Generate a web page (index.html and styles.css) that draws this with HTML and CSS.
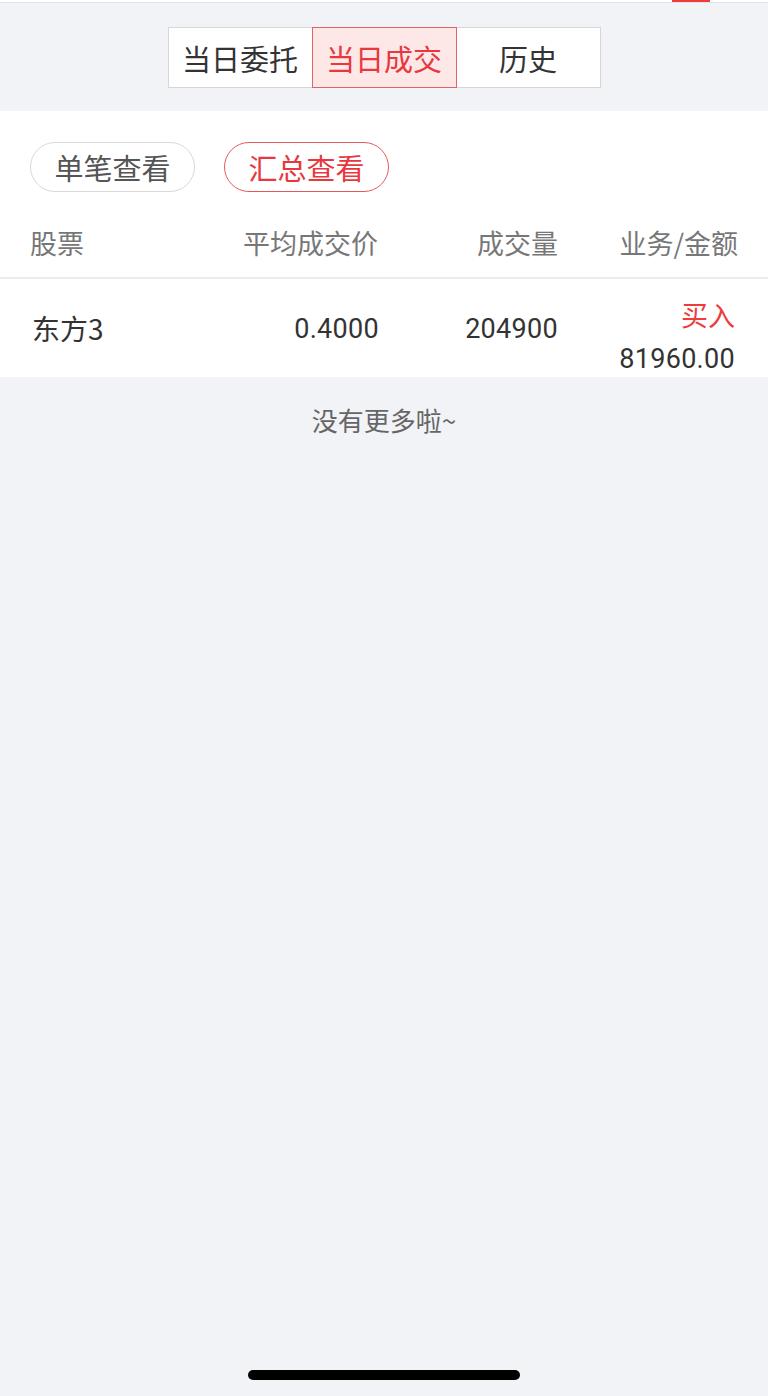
FILE: index.html
```html
<!DOCTYPE html>
<html lang="zh-CN">
<head>
<meta charset="utf-8">
<link rel="stylesheet" href="styles.css">
</head>
<body>
<div class="page">
  <div class="topbar"><span class="topmark"></span></div>
  <div class="tabs-wrap">
    <div class="tabs">
      <div class="tab">当日委托</div>
      <div class="tab active">当日成交</div>
      <div class="tab">历史</div>
    </div>
  </div>
  <div class="panel">
    <div class="pills">
      <div class="pill">单笔查看</div>
      <div class="pill active">汇总查看</div>
    </div>
    <div class="row head">
      <div class="c1">股票</div>
      <div class="c2">平均成交价</div>
      <div class="c3">成交量</div>
      <div class="c4">业务/金额</div>
    </div>
    <div class="row data">
      <div class="c1 name">东方3</div>
      <div class="c2 num">0.4000</div>
      <div class="c3 num">204900</div>
      <div class="c4 stack">
        <span class="buy">买入</span>
        <span class="num">81960.00</span>
      </div>
    </div>
  </div>
  <div class="nomore">没有更多啦~</div>
  <div class="spacer"></div>
  <div class="home"><span class="bar"></span></div>
</div>
</body>
</html>
```
FILE: styles.css
```css
* { box-sizing: border-box; margin: 0; padding: 0; }
html, body { width: 768px; height: 1396px; }
body {
  background: #f2f3f7;
  font-family: "Noto Sans CJK SC", "Noto Sans", sans-serif;
  color: #333;
}
.page { display: flex; flex-direction: column; height: 1396px; }
.topbar {
  height: 3px;
  background: #fff;
  border-bottom: 1px solid #e2e3e8;
  position: relative;
}
.topmark {
  position: absolute;
  left: 672px;
  top: 0;
  width: 38px;
  height: 2px;
  background: #ee3b3b;
}
.tabs-wrap {
  height: 108px;
  display: flex;
  justify-content: center;
  padding-top: 24px;
}
.tabs {
  display: flex;
  height: 61px;
  background: #fff;
  border: 1px solid #d6d6d9;
}
.tab {
  width: 143px;
  display: flex;
  align-items: center;
  justify-content: center;
  font-size: 29px;
  color: #333;
  line-height: 1;
  padding-top: 2px;
}
.tab.active {
  width: 145px;
  margin: -1px 0;
  height: 61px;
  background: #fde7e7;
  border: 1px solid #e06366;
  color: #e8383d;
}
.panel {
  background: #fff;
  height: 266px;
}
.pills {
  display: flex;
  gap: 29px;
  padding: 31px 0 0 30px;
  height: 98px;
}
.pill {
  width: 165px;
  height: 50px;
  border: 1px solid #d9d9d9;
  border-radius: 25px;
  display: flex;
  align-items: center;
  justify-content: center;
  font-size: 29px;
  color: #555;
}
.pill.active {
  border-color: #e4595c;
  color: #e8383d;
}
.row {
  display: grid;
  grid-template-columns: 168px 180px 180px 180px;
  padding: 0 30px;
}
.row.head {
  height: 70px;
  align-items: center;
  border-bottom: 2px solid #ececee;
  font-size: 27px;
  color: #777;
  padding-bottom: 2px;
}
.c1 { text-align: left; }
.c2, .c3, .c4 { text-align: right; }
.row.data {
  height: 98px;
  align-items: center;
  font-size: 27px;
  color: #333;
}
.name { padding-left: 2px; font-size: 28px; padding-bottom: 4px; }
.num {
  font-family: "Roboto", "Noto Sans", sans-serif;
  font-size: 27px;
  color: #333;
  letter-spacing: 0.3px;
}
.row.data .c2, .row.data .c3 { padding-bottom: 2px; }
.row.data .c2 { margin-right: -1px; }
.stack {
  display: flex;
  flex-direction: column;
  align-items: flex-end;
  padding-right: 3px;
  line-height: 44px;
  padding-top: 14px;
}
.buy { color: #ee3b3b; font-size: 27px; }
.nomore {
  text-align: center;
  font-size: 26px;
  color: #666;
  padding-top: 26px;
  line-height: 34px;
}
.spacer { flex: 1; }
.home {
  height: 26px;
  display: flex;
  justify-content: center;
  align-items: flex-start;
}
.bar {
  width: 272px;
  height: 10px;
  background: #000;
  border-radius: 5px;
}
```
